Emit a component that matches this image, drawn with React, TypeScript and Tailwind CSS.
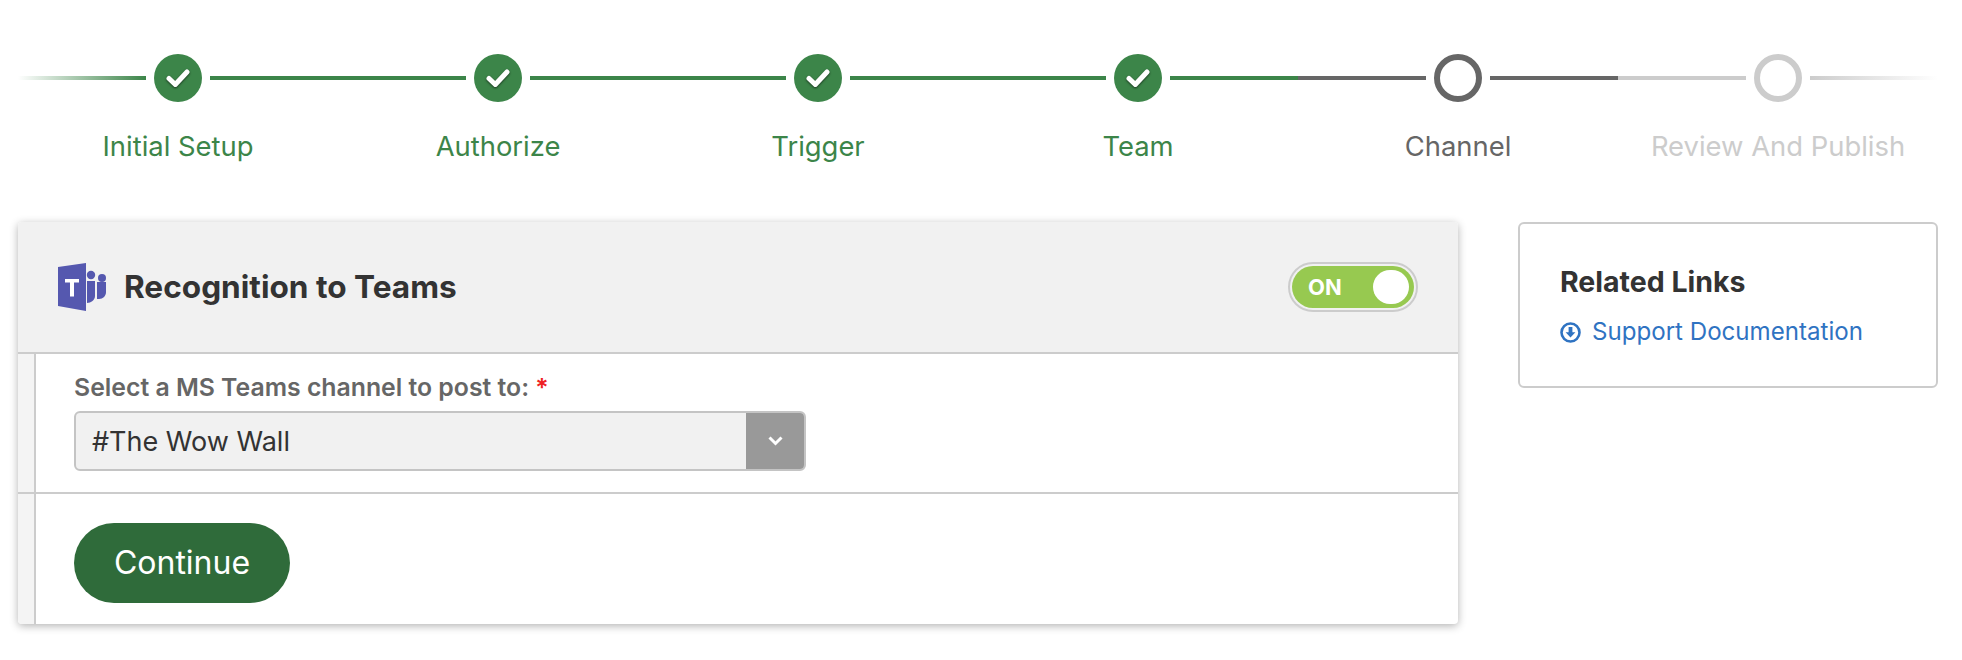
type StepState = "done" | "current" | "todo";

const steps: { label: string; state: StepState }[] = [
  { label: "Initial Setup", state: "done" },
  { label: "Authorize", state: "done" },
  { label: "Trigger", state: "done" },
  { label: "Team", state: "done" },
  { label: "Channel", state: "current" },
  { label: "Review And Publish", state: "todo" },
];

const lineColor = {
  done: "bg-[#3c8549]",
  current: "bg-[#666666]",
  todo: "bg-[#cccccc]",
};

const labelColor = {
  done: "text-[#3c8549]",
  current: "text-[#666666]",
  todo: "text-[#cccccc]",
};

function StepCircle({ state }: { state: StepState }) {
  if (state === "done") {
    return (
      <div className="w-12 h-12 shrink-0 rounded-full bg-[#3c8549]">
        <svg width="48" height="48" viewBox="0 0 48 48" className="drop-shadow-[0_1px_1px_rgba(0,0,0,0.6)]">
          <path
            d="M15 24.5 21.3 30.5 33 18"
            fill="none"
            stroke="#ffffff"
            strokeWidth="5"
            strokeLinecap="round"
            strokeLinejoin="round"
          />
        </svg>
      </div>
    );
  }
  return (
    <div
      className={
        state === "current"
          ? "w-12 h-12 shrink-0 rounded-full border-[6px] border-[#666666]"
          : "w-12 h-12 shrink-0 rounded-full border-[6px] border-[#cccccc]"
      }
    />
  );
}

function Stepper() {
  return (
    <div className="flex w-[1920px] ml-[18px] pt-[54px]">
      {steps.map((step, i) => (
        <div key={step.label} className="w-[320px] flex flex-col items-center">
          <div className="w-full flex items-center gap-2">
            {i === 0 ? (
              <div className="h-1 flex-1 bg-gradient-to-r from-transparent to-[#3c8549]" />
            ) : (
              <div className={`h-1 flex-1 ${lineColor[step.state]}`} />
            )}
            <StepCircle state={step.state} />
            {i === steps.length - 1 ? (
              <div className="h-1 flex-1 bg-gradient-to-r from-[#cccccc] to-transparent" />
            ) : (
              <div className={`h-1 flex-1 ${lineColor[step.state]}`} />
            )}
          </div>
          <div className={`mt-[26px] text-[27.4px] leading-9 ${labelColor[step.state]}`}>{step.label}</div>
        </div>
      ))}
    </div>
  );
}

function TeamsLogo() {
  return (
    <svg width="48" height="48" viewBox="0 0 48 48" className="shrink-0">
      <circle cx="33" cy="12" r="4.2" fill="#5558af" />
      <circle cx="44" cy="15" r="4" fill="#5558af" />
      <path d="M29 18h8v15c0 4-4 7-8 7z" fill="#5558af" />
      <path d="M39 19h9v10c0 4-3 7-7 7h-2c0-1 0-1 0-3z" fill="#5558af" />
      <path d="M0 4 28 0v48L0 43z" fill="#5558af" />
      <path d="M7 16h14v3.4h-5v14h-4v-14H7z" fill="#ffffff" />
    </svg>
  );
}

function Toggle() {
  return (
    <div className="w-[130px] h-[50px] rounded-full border-2 border-[#cccccc] p-0.5 bg-[#f1f1f1]">
      <div className="w-full h-full rounded-full bg-[#97c950] flex items-center justify-between pl-[16px] pr-[5px]">
        <span className="text-white font-bold text-[22px]">ON</span>
        <div className="w-9 h-[34px] rounded-full bg-white" />
      </div>
    </div>
  );
}

function SideRow({ children }: { children: React.ReactNode }) {
  return (
    <div className="flex border-t-2 border-[#cccccc]">
      <div className="w-[18px] shrink-0 bg-[#f4f4f4] border-r-2 border-[#cccccc]" />
      <div className="flex-1">{children}</div>
    </div>
  );
}

function MainCard() {
  return (
    <div className="w-[1440px] h-[402px] bg-white rounded shadow-[0_2px_8px_rgba(0,0,0,0.3)] overflow-hidden flex flex-col">
      <div className="h-[131px] bg-[#f1f1f1] flex items-center justify-between pl-10 pr-10">
        <div className="flex items-center gap-[18px]">
          <TeamsLogo />
          <h2 className="font-bold text-[31.6px] text-[#333333]">Recognition to Teams</h2>
        </div>
        <Toggle />
      </div>
      <SideRow>
        <div className="h-[138px] pl-[38px] pt-[17px]">
          <div className="text-[24.8px] leading-8 font-semibold text-[#666666]">
            Select a MS Teams channel to post to: <span className="text-[#ee2222]">*</span>
          </div>
          <div className="mt-2 w-[732px] h-[60px] flex rounded-md border-2 border-[#c4c4c4] bg-[#f1f1f1] overflow-hidden">
            <div className="flex-1 pl-4 text-[27px] leading-[58px] text-[#333333]">#The Wow Wall</div>
            <div className="w-[58px] bg-[#999999] flex items-center justify-center">
              <svg width="15" height="10" viewBox="0 0 15 10">
                <path d="M1.5 1.5 7.5 7.5 13.5 1.5" fill="none" stroke="#ffffff" strokeWidth="3" />
              </svg>
            </div>
          </div>
        </div>
      </SideRow>
      <SideRow>
        <div className="h-[130px] pl-[38px] pt-[29px]">
          <button
            type="button"
            className="w-[216px] h-20 rounded-[40px] bg-[#2f6b3a] text-white text-[32px]"
          >
            Continue
          </button>
        </div>
      </SideRow>
    </div>
  );
}

function RelatedLinks() {
  return (
    <div className="w-[420px] h-[166px] rounded-md border-2 border-[#cccccc] pl-[40px] pt-[38px]">
      <h3 className="font-bold text-[28.5px] leading-10 text-[#333333]">Related Links</h3>
      <a className="mt-[14px] flex items-center gap-[11px] text-[24.1px] leading-8 text-[#2f73c2]">
        <svg width="21" height="21" viewBox="0 0 21 21" className="shrink-0">
          <circle cx="10.5" cy="10.5" r="9" fill="none" stroke="#2f73c2" strokeWidth="2.6" />
          <path d="M8.6 5h3.8v5.2h3L10.5 15.6 5.6 10.2h3z" fill="#2f73c2" />
        </svg>
        Support Documentation
      </a>
    </div>
  );
}

export default function App() {
  return (
    <div className="w-[1962px] h-[660px] bg-white overflow-hidden font-['Inter',sans-serif]">
      <Stepper />
      <div className="flex gap-[60px] ml-[18px] mt-[58px]">
        <MainCard />
        <RelatedLinks />
      </div>
    </div>
  );
}
